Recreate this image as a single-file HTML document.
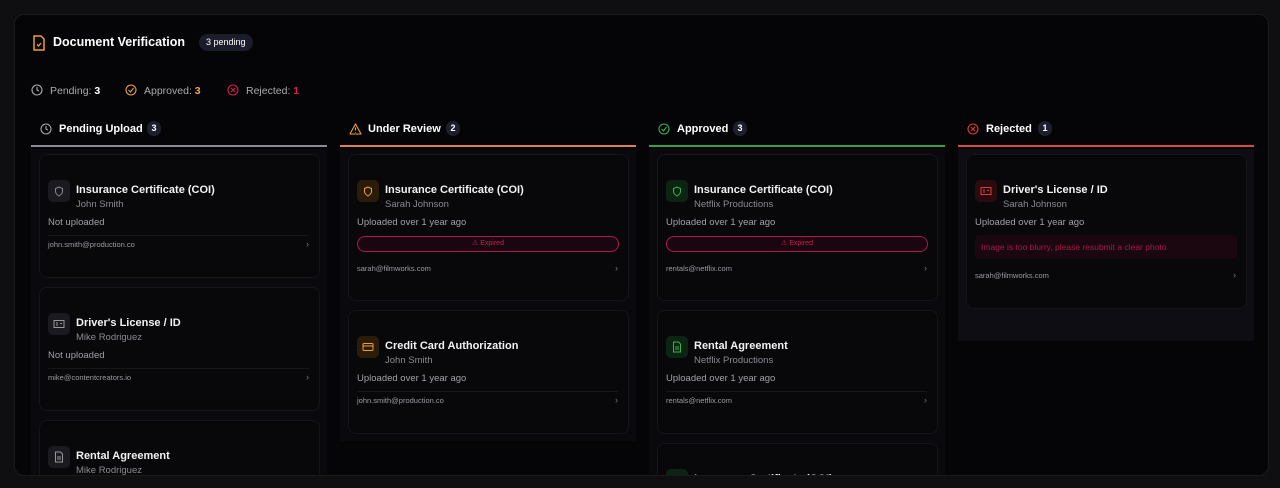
<!DOCTYPE html>
<html><head><meta charset="utf-8"><style>
*{box-sizing:border-box;margin:0;padding:0}
html,body{width:1280px;height:488px;overflow:hidden}
body{background:#0f0f11;font-family:"Liberation Sans",sans-serif;position:relative;color:#fff}
.panel{position:absolute;left:14px;top:14px;width:1255px;height:462px;background:#050507;border:1px solid #1a1a1e;border-radius:10px;overflow:hidden}
.abs{position:absolute}
.col{position:absolute;top:102px;width:296px;height:360px}
.colhead{position:absolute;left:0;top:0;width:296px;height:30px;border-bottom:2px solid}
.colhead .t{position:absolute;left:28px;top:6px;font-size:11px;font-weight:bold}
.colhead svg{top:6px!important}
.badge{position:absolute;top:4px;height:15px;min-width:14px;padding:0 4px;border-radius:8px;background:#1e1f2e;font-size:9px;font-weight:bold;line-height:15px;text-align:center}
.body{position:absolute;left:0;top:32px;width:296px;background:#0a0a0e}
.card{position:absolute;left:8px;width:281px;background:#08080b;border:1px solid #141419;border-radius:8px}
.ic{position:absolute;left:8px;top:25px;width:22px;height:22px;border-radius:5px;display:flex;align-items:center;justify-content:center}
.ttl{position:absolute;left:36px;top:29px;font-size:11px;font-weight:bold;color:#f2f2f4}
.sub{position:absolute;left:36px;top:44px;font-size:9.5px;color:#8a8a92}
.st{position:absolute;left:8px;top:62px;font-size:9.5px;color:#a0a0a8}
.div{position:absolute;left:8px;right:10px;height:1px;background:#16161c}
.em{position:absolute;left:8px;font-size:7.5px;color:#9a9aa2}
.chev{position:absolute;right:10px;font-size:9px;color:#777}
.exp{position:absolute;left:8px;right:9px;top:81px;height:16px;border:1.5px solid #b0184a;border-radius:8px;background:#1a0610;color:#c8204f;font-size:7px;text-align:center;line-height:13px}
</style></head><body>
<div class="panel">
  <svg class="abs" style="left:17px;top:20px" width="14" height="16" viewBox="0 0 14 16"><path d="M2 1h7l3 3v11H2z" fill="none" stroke="#f0a030" stroke-width="1.5" stroke-linejoin="round"/><path d="M5 9.5l1.5 1.5L9 8" fill="none" stroke="#f0a030" stroke-width="1.3"/></svg>
  <div class="abs" style="left:38px;top:20px;font-size:12.5px;font-weight:bold">Document Verification</div>
  <div class="abs" style="left:184px;top:19px;height:17px;padding:0 7px;border-radius:9px;background:#1c1d2b;font-size:9px;line-height:17px">3 pending</div>

  <svg class="abs" style="left:16px;top:69px" width="12" height="12" viewBox="0 0 12 12"><circle cx="6" cy="6" r="5" fill="none" stroke="#aaa" stroke-width="1.1"/><path d="M6 3v3l2 1" fill="none" stroke="#aaa" stroke-width="1.1"/></svg>
  <div class="abs" style="left:35px;top:70px;font-size:10.5px;color:#aaa">Pending: <b style="color:#fff">3</b></div>
  <svg class="abs" style="left:110px;top:69px" width="12" height="12" viewBox="0 0 12 12"><circle cx="6" cy="6" r="5" fill="none" stroke="#e8a040" stroke-width="1.1"/><path d="M3.5 6l2 2 3-4" fill="none" stroke="#e8a040" stroke-width="1.1"/></svg>
  <div class="abs" style="left:129px;top:70px;font-size:10.5px;color:#aaa">Approved: <b style="color:#f0a848">3</b></div>
  <svg class="abs" style="left:212px;top:69px" width="12" height="12" viewBox="0 0 12 12"><circle cx="6" cy="6" r="5" fill="none" stroke="#d0204f" stroke-width="1.1"/><path d="M4 4l4 4M8 4l-4 4" stroke="#d0204f" stroke-width="1.1"/></svg>
  <div class="abs" style="left:231px;top:70px;font-size:10.5px;color:#aaa">Rejected: <b style="color:#e0204f">1</b></div>

  <!-- col 1 -->
  <div class="col" style="left:16px">
    <div class="colhead" style="border-color:#8a8a96"><svg class="abs" style="left:9px" width="12" height="12" viewBox="0 0 12 12"><circle cx="6" cy="6" r="5" fill="none" stroke="#aaa" stroke-width="1.1"/><path d="M6 3v3l2 1" fill="none" stroke="#aaa" stroke-width="1.1"/></svg><div class="t">Pending Upload</div><div class="badge" style="left:116px">3</div></div>
    <div class="body" style="height:340px">
      <div class="card" style="top:5px;height:124px">
        <div class="ic" style="background:#1a1a20"><svg width="10" height="11" viewBox="0 0 10 11"><path d="M5 1L1.5 2.5v3C1.5 8 5 10 5 10s3.5-2 3.5-4.5v-3z" fill="none" stroke="#888" stroke-width="1"/></svg></div>
        <div class="ttl">Insurance Certificate (COI)</div><div class="sub">John Smith</div><div class="st">Not uploaded</div>
        <div class="div" style="top:80px"></div><div class="em" style="top:85px">john.smith@production.co</div><div class="chev" style="top:84px">›</div>
      </div>
      <div class="card" style="top:138px;height:124px">
        <div class="ic" style="background:#1a1a20"><svg width="12" height="10" viewBox="0 0 12 10"><rect x="1" y="1.5" width="10" height="7" fill="none" stroke="#999" stroke-width="1"/><path d="M3 4h2M3 6h2M7 4.5h2" stroke="#999" stroke-width=".9"/></svg></div>
        <div class="ttl">Driver's License / ID</div><div class="sub">Mike Rodriguez</div><div class="st">Not uploaded</div>
        <div class="div" style="top:80px"></div><div class="em" style="top:85px">mike@contentcreators.io</div><div class="chev" style="top:84px">›</div>
      </div>
      <div class="card" style="top:271px;height:124px">
        <div class="ic" style="background:#1a1a20"><svg width="10" height="12" viewBox="0 0 10 12"><path d="M1.5 1h5l2 2v8h-7z" fill="none" stroke="#999" stroke-width="1"/><path d="M3 6h4M3 8h4" stroke="#999" stroke-width=".9"/></svg></div>
        <div class="ttl">Rental Agreement</div><div class="sub">Mike Rodriguez</div><div class="st">Not uploaded</div>
      </div>
    </div>
  </div>

  <!-- col 2 -->
  <div class="col" style="left:325px">
    <div class="colhead" style="border-color:#e08050"><svg class="abs" style="left:9px" width="13" height="12" viewBox="0 0 13 12"><path d="M6.5 1L12 11H1z" fill="none" stroke="#f0a030" stroke-width="1.1" stroke-linejoin="round"/><path d="M6.5 4.5v3M6.5 9v.5" stroke="#f0a030" stroke-width="1.1"/></svg><div class="t">Under Review</div><div class="badge" style="left:106px">2</div></div>
    <div class="body" style="height:292px">
      <div class="card" style="top:5px;height:147px">
        <div class="ic" style="background:#2a1c08"><svg width="10" height="11" viewBox="0 0 10 11"><path d="M5 1L1.5 2.5v3C1.5 8 5 10 5 10s3.5-2 3.5-4.5v-3z" fill="none" stroke="#f0a030" stroke-width="1"/></svg></div>
        <div class="ttl">Insurance Certificate (COI)</div><div class="sub">Sarah Johnson</div><div class="st">Uploaded over 1 year ago</div>
        <div class="exp">⚠ Expired</div>
        <div class="em" style="top:109px">sarah@filmworks.com</div><div class="chev" style="top:108px">›</div>
      </div>
      <div class="card" style="top:161px;height:124px">
        <div class="ic" style="background:#2a1c08"><svg width="12" height="10" viewBox="0 0 12 10"><rect x="1" y="1.5" width="10" height="7" rx="1" fill="none" stroke="#f0a030" stroke-width="1"/><path d="M1 4h10" stroke="#f0a030" stroke-width="1"/></svg></div>
        <div class="ttl">Credit Card Authorization</div><div class="sub">John Smith</div><div class="st">Uploaded over 1 year ago</div>
        <div class="div" style="top:80px"></div><div class="em" style="top:85px">john.smith@production.co</div><div class="chev" style="top:84px">›</div>
      </div>
    </div>
  </div>

  <!-- col 3 -->
  <div class="col" style="left:634px">
    <div class="colhead" style="border-color:#3aa04a"><svg class="abs" style="left:9px" width="12" height="12" viewBox="0 0 12 12"><circle cx="6" cy="6" r="5" fill="none" stroke="#3ab050" stroke-width="1.1"/><path d="M3.5 6l2 2 3-4" fill="none" stroke="#3ab050" stroke-width="1.1"/></svg><div class="t">Approved</div><div class="badge" style="left:84px">3</div></div>
    <div class="body" style="height:340px">
      <div class="card" style="top:5px;height:147px">
        <div class="ic" style="background:#0c2412"><svg width="10" height="11" viewBox="0 0 10 11"><path d="M5 1L1.5 2.5v3C1.5 8 5 10 5 10s3.5-2 3.5-4.5v-3z" fill="none" stroke="#3ab050" stroke-width="1"/></svg></div>
        <div class="ttl">Insurance Certificate (COI)</div><div class="sub">Netflix Productions</div><div class="st">Uploaded over 1 year ago</div>
        <div class="exp">⚠ Expired</div>
        <div class="em" style="top:109px">rentals@netflix.com</div><div class="chev" style="top:108px">›</div>
      </div>
      <div class="card" style="top:161px;height:124px">
        <div class="ic" style="background:#0c2412"><svg width="10" height="12" viewBox="0 0 10 12"><path d="M1.5 1h5l2 2v8h-7z" fill="none" stroke="#3ab050" stroke-width="1"/><path d="M3 6h4M3 8h4" stroke="#3ab050" stroke-width=".9"/></svg></div>
        <div class="ttl">Rental Agreement</div><div class="sub">Netflix Productions</div><div class="st">Uploaded over 1 year ago</div>
        <div class="div" style="top:80px"></div><div class="em" style="top:85px">rentals@netflix.com</div><div class="chev" style="top:84px">›</div>
      </div>
      <div class="card" style="top:294px;height:124px">
        <div class="ic" style="background:#0c2412"><svg width="10" height="11" viewBox="0 0 10 11"><path d="M5 1L1.5 2.5v3C1.5 8 5 10 5 10s3.5-2 3.5-4.5v-3z" fill="none" stroke="#3ab050" stroke-width="1"/></svg></div>
        <div class="ttl">Insurance Certificate (COI)</div>
      </div>
    </div>
  </div>

  <!-- col 4 -->
  <div class="col" style="left:943px">
    <div class="colhead" style="border-color:#e04848"><svg class="abs" style="left:9px" width="12" height="12" viewBox="0 0 12 12"><circle cx="6" cy="6" r="5" fill="none" stroke="#e03a3a" stroke-width="1.1"/><path d="M4 4l4 4M8 4l-4 4" stroke="#e03a3a" stroke-width="1.1"/></svg><div class="t">Rejected</div><div class="badge" style="left:80px">1</div></div>
    <div class="body" style="height:192px;background:#0d0d13">
      <div class="card" style="top:5px;height:155px">
        <div class="ic" style="background:#2a0c10"><svg width="12" height="10" viewBox="0 0 12 10"><rect x="1" y="1.5" width="10" height="7" fill="none" stroke="#e03a3a" stroke-width="1"/><path d="M3 4h2M3 6h2M7 4.5h2" stroke="#e03a3a" stroke-width=".9"/></svg></div>
        <div class="ttl">Driver's License / ID</div><div class="sub">Sarah Johnson</div><div class="st">Uploaded over 1 year ago</div>
        <div class="abs" style="left:8px;right:9px;top:80px;height:24px;background:#1a0710;border-radius:4px;color:#a81a44;font-size:8.5px;line-height:24px;padding-left:6px">Image is too blurry, please resubmit a clear photo</div>
        <div class="em" style="top:116px">sarah@filmworks.com</div><div class="chev" style="top:115px">›</div>
      </div>
    </div>
  </div>
</div>
</body></html>
